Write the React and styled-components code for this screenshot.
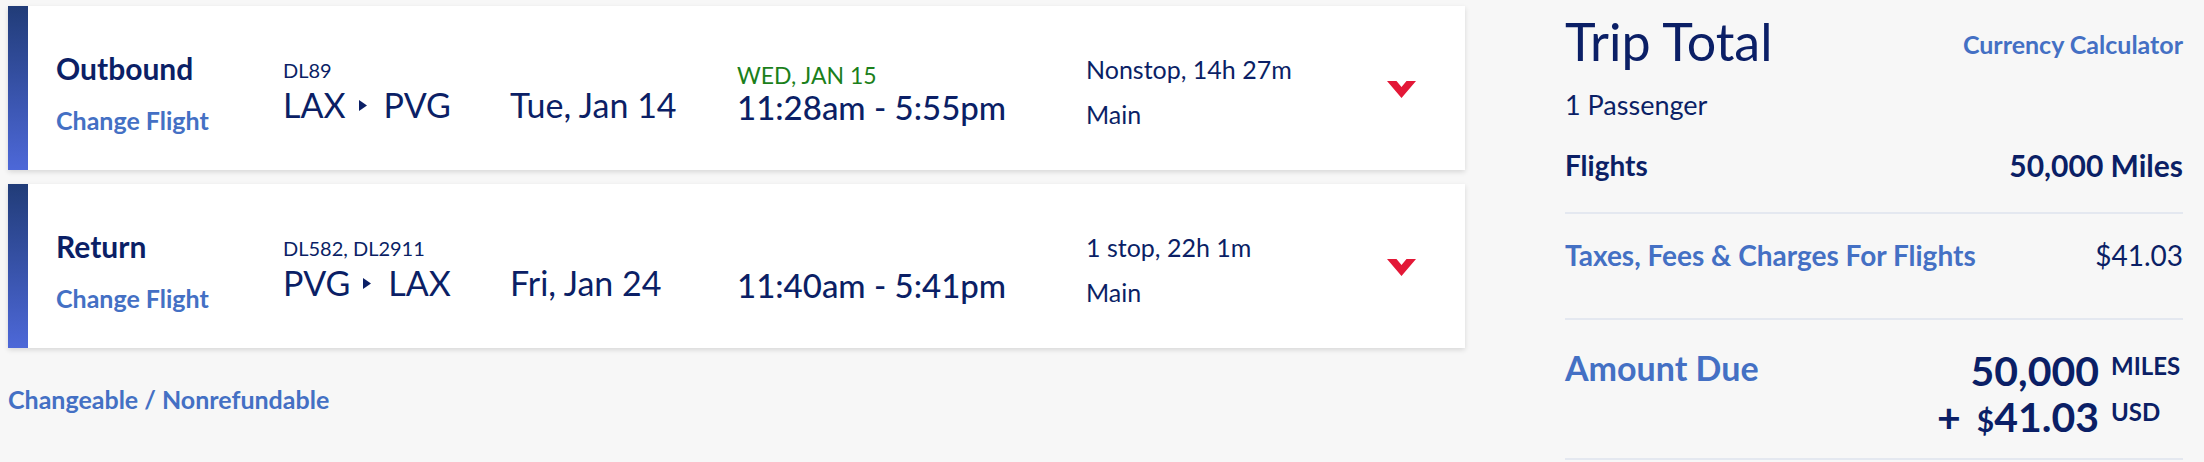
import React from 'react';
import styled, { createGlobalStyle } from 'styled-components';

const GlobalStyle = createGlobalStyle`
  body {
    margin: 0;
    background: #f7f7f7;
    font-family: 'Lato', 'Open Sans', sans-serif;
    color: #0b1f66;
  }
`;

const Page = styled.div`
  display: flex;
  align-items: flex-start;
  padding: 6px 21px 0 8px;
  height: 462px;
  box-sizing: border-box;
`;

const Flights = styled.div`
  flex: 0 0 1457px;
  display: flex;
  flex-direction: column;
  gap: 14px;
`;

const Card = styled.div`
  display: flex;
  height: 164px;
  background: #fff;
  box-shadow: 0 2px 5px rgba(0, 0, 0, 0.13);
`;

const Stripe = styled.div`
  flex: 0 0 20px;
  background: linear-gradient(180deg, #213c78 0%, #4d68d8 100%);
`;

const CardBody = styled.div`
  display: grid;
  grid-template-columns: 227px 227px 227px 349px 301px 28px;
  padding-left: 28px;
`;

const Col = styled.div`
  display: flex;
  flex-direction: column;
  padding-top: ${p => p.$top}px;
`;

const Direction = styled.div`
  font-size: 30px;
  line-height: 34px;
  font-weight: 700;
`;

const Link = styled.a`
  display: block;
  color: #4470c4;
  font-weight: 700;
  font-size: ${p => p.$size || 25}px;
  line-height: ${p => p.$lh || 30}px;
  margin-top: ${p => p.$mt || 0}px;
  text-decoration: none;
  cursor: pointer;
  white-space: nowrap;
`;

const FlightNo = styled.div`
  font-size: 20px;
  line-height: 22px;
  margin-bottom: 4px;
`;

const Route = styled.div`
  display: flex;
  align-items: center;
  font-size: 34px;
  line-height: 40px;
  white-space: nowrap;

  svg {
    margin: 0 17px 0 13px;
  }
`;

const BigDate = styled.div`
  font-size: 34px;
  line-height: 40px;
  white-space: nowrap;
`;

const ArrivalNote = styled.div`
  color: #1b7f1b;
  font-size: 23px;
  line-height: 24px;
  height: 24px;
  white-space: nowrap;
`;

const Times = styled.div`
  font-size: 33px;
  line-height: 40px;
  font-weight: 500;
  white-space: nowrap;
`;

const Detail = styled.div`
  font-size: 25px;
  line-height: 30px;
  white-space: nowrap;
  & + & {
    margin-top: 15px;
  }
`;

const Fare = styled(Link)`
  margin-top: 22px;
`;

const Summary = styled.div`
  flex: 0 0 618px;
  margin-left: auto;
`;

const TitleRow = styled.div`
  display: flex;
  justify-content: space-between;
  align-items: flex-start;
  margin-top: 5px;
`;

const Title = styled.h1`
  margin: 0;
  font-size: 52px;
  line-height: 60px;
  font-weight: 400;
`;

const Passengers = styled.div`
  font-size: 27px;
  line-height: 30px;
  margin-top: 19px;
`;

const Line = styled.div`
  display: flex;
  justify-content: space-between;
  align-items: flex-start;
  padding: ${p => p.$pad};
  border-bottom: 2px solid #e4e8f0;
`;

const LineLabel = styled.div`
  font-size: ${p => p.$size || 28}px;
  line-height: 34px;
  font-weight: ${p => (p.$bold ? 700 : 400)};
  color: ${p => (p.$link ? '#4470c4' : '#0b1f66')};
`;

const AmountLabel = styled.div`
  color: #4470c4;
  font-size: 34px;
  line-height: 40px;
  font-weight: 700;
`;

const Amount = styled.div`
  text-align: right;
  font-size: 41px;
  line-height: 46px;
  font-weight: 700;
  white-space: nowrap;
`;

const Unit = styled.span`
  display: inline-block;
  width: 72px;
  margin-left: 12px;
  text-align: left;
  font-size: 24px;
  line-height: 1;
  vertical-align: 11px;
`;

const Dollar = styled.span`
  font-size: 30px;
`;

const Plus = styled.span`
  margin-right: 16px;
`;

const Arrow = () => (
  <svg width="8" height="11" viewBox="0 0 8 11">
    <polygon points="0,0 8,5.5 0,11" fill="#0b1f66" />
  </svg>
);

const Chevron = () => (
  <svg width="29" height="17" viewBox="0 0 29 17">
    <polygon points="0,0 9.5,0 14.5,6 19.5,0 29,0 14.5,17" fill="#e31837" />
  </svg>
);

const flights = [
  {
    dir: 'Outbound',
    no: 'DL89',
    from: 'LAX',
    to: 'PVG',
    date: 'Tue, Jan 14',
    note: 'WED, JAN 15',
    times: '11:28am - 5:55pm',
    stops: 'Nonstop, 14h 27m',
    cabin: 'Main',
  },
  {
    dir: 'Return',
    no: 'DL582, DL2911',
    from: 'PVG',
    to: 'LAX',
    date: 'Fri, Jan 24',
    note: '',
    times: '11:40am - 5:41pm',
    stops: '1 stop, 22h 1m',
    cabin: 'Main',
  },
];

const FlightCard = ({ f }) => (
  <Card>
    <Stripe />
    <CardBody>
      <Col $top={45}>
        <Direction>{f.dir}</Direction>
        <Link $mt={20}>Change Flight</Link>
      </Col>
      <Col $top={53}>
        <FlightNo>{f.no}</FlightNo>
        <Route>
          {f.from}
          <Arrow />
          {f.to}
        </Route>
      </Col>
      <Col $top={79}>
        <BigDate>{f.date}</BigDate>
      </Col>
      <Col $top={57}>
        <ArrivalNote>{f.note}</ArrivalNote>
        <Times>{f.times}</Times>
      </Col>
      <Col $top={48}>
        <Detail>{f.stops}</Detail>
        <Detail>{f.cabin}</Detail>
      </Col>
      <Col $top={75}>
        <Chevron />
      </Col>
    </CardBody>
  </Card>
);

export default function App() {
  return (
    <>
      <GlobalStyle />
      <Page>
        <Flights>
          {flights.map(f => (
            <FlightCard key={f.dir} f={f} />
          ))}
          <Fare>Changeable / Nonrefundable</Fare>
        </Flights>
        <Summary>
          <TitleRow>
            <Title>Trip Total</Title>
            <Link $size={25} $lh={28} $mt={19}>Currency Calculator</Link>
          </TitleRow>
          <Passengers>1 Passenger</Passengers>
          <Line $pad="28px 0 30px">
            <LineLabel $bold>Flights</LineLabel>
            <LineLabel $bold $size={30}>50,000 Miles</LineLabel>
          </Line>
          <Line $pad="24px 0 46px">
            <LineLabel $bold $link>Taxes, Fees &amp; Charges For Flights</LineLabel>
            <LineLabel>$41.03</LineLabel>
          </Line>
          <Line $pad="28px 0 15px">
            <AmountLabel>Amount Due</AmountLabel>
            <Amount>
              <div>
                50,000<Unit>MILES</Unit>
              </div>
              <div>
                <Plus>+</Plus>
                <Dollar>$</Dollar>41.03<Unit>USD</Unit>
              </div>
            </Amount>
          </Line>
        </Summary>
      </Page>
    </>
  );
}
